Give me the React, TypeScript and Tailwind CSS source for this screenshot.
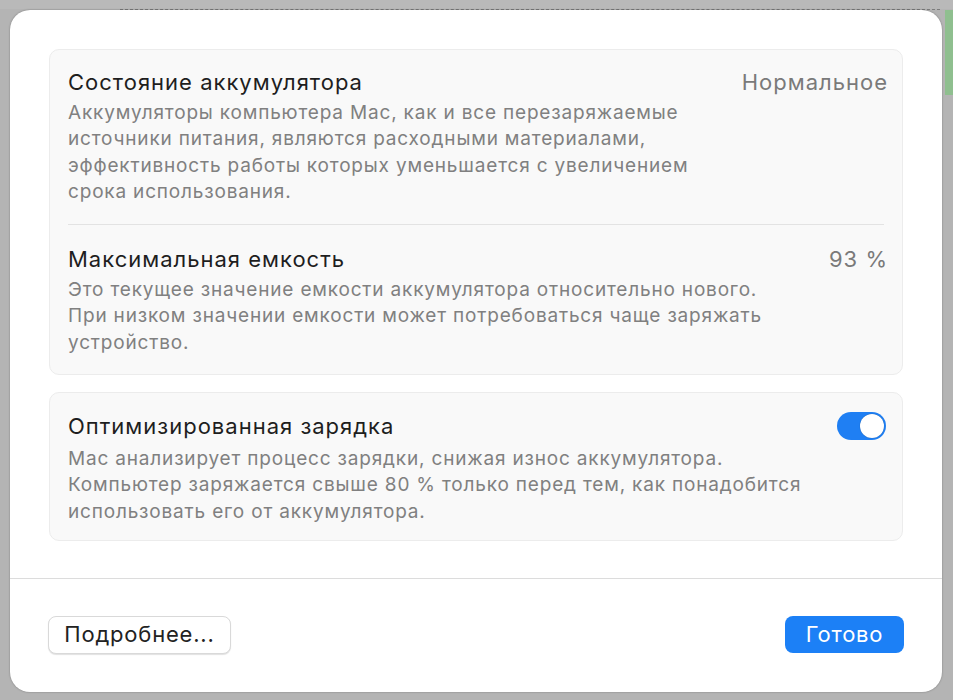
import React from "react";

const T = "text-[22px] leading-[26px] tracking-[1px] text-[#1e1e1e]";
const V = "text-[22px] leading-[26px] tracking-[1px] text-[#7a7a7a] mr-[-4px]";
const D = "text-[19px] leading-[26.3px] tracking-[0.82px] text-[#808080]";

export default function App() {
  const font = { fontFamily: "Inter, 'Noto Sans', sans-serif" };
  return (
    <div className="relative w-[953px] h-[700px] overflow-hidden bg-[#b4b4b4]" style={font}>
      <div className="absolute left-[945px] top-[10px] w-[8px] h-[85px] bg-[#8fbf8f]" />
      <div className="absolute left-[120px] top-[9px] w-[820px] border-t border-dashed border-[#7c7c7c]" />
      <div className="absolute left-0 top-0 w-full h-[9px] bg-[#b9b9b9]" />

      <div className="absolute left-[10px] top-[10px] w-[932px] h-[682px] bg-white rounded-[20px] shadow-[0_0_2px_rgba(0,0,0,0.35)] flex flex-col">
        <div className="flex flex-col gap-[17px] px-[39px] pt-[39px]">
          <div className="rounded-[10px] bg-[#f9f9f9] border border-[#ececec] px-[18px]">
            <div className="pt-[19px] pb-[19px] border-b border-[#e3e3e3]">
              <div className="flex justify-between items-start">
                <div className={T}>Состояние аккумулятора</div>
                <div className={V}>Нормальное</div>
              </div>
              <div className={`mt-[5px] ${D}`}>
                Аккумуляторы компьютера Mac, как и все перезаряжаемые<br />
                источники питания, являются расходными материалами,<br />
                эффективность работы которых уменьшается с увеличением<br />
                срока использования.
              </div>
            </div>
            <div className="pt-[21px] pb-[18px]">
              <div className="flex justify-between items-start">
                <div className={T}>Максимальная емкость</div>
                <div className={V}>93 %</div>
              </div>
              <div className={`mt-[5px] ${D}`}>
                Это текущее значение емкости аккумулятора относительно нового.<br />
                При низком значении емкости может потребоваться чаще заряжать<br />
                устройство.
              </div>
            </div>
          </div>

          <div className="rounded-[10px] bg-[#f9f9f9] border border-[#ececec] px-[18px] pt-[19px] pb-[15px]">
            <div className="flex justify-between items-center">
              <div className={T}>Оптимизированная зарядка</div>
              <div className="w-[49px] h-[28px] mr-[-2px] rounded-full bg-[#1f7ff3] p-[2px] flex justify-end">
                <div className="w-[24px] h-[24px] rounded-full bg-white shadow-[0_0_1px_rgba(0,0,0,0.4)]" />
              </div>
            </div>
            <div className={`mt-[6px] ${D}`}>
              Mac анализирует процесс зарядки, снижая износ аккумулятора.<br />
              Компьютер заряжается свыше 80 % только перед тем, как понадобится<br />
              использовать его от аккумулятора.
            </div>
          </div>
        </div>

        <div className="mt-[37px] border-t border-[#dcdcdc]" />

        <div className="flex justify-between items-center px-[38px] pt-[37px]">
          <button className="h-[38px] w-[183px] rounded-[8px] bg-white border border-[#d9d9d9] shadow-[0_1px_1px_rgba(0,0,0,0.12)] text-[22px] tracking-[0.8px] text-[#222]">
            Подробнее...
          </button>
          <button className="h-[37px] w-[119px] rounded-[8px] bg-[#1c80f6] text-[22px] tracking-[0.8px] text-white">
            Готово
          </button>
        </div>
      </div>
    </div>
  );
}
